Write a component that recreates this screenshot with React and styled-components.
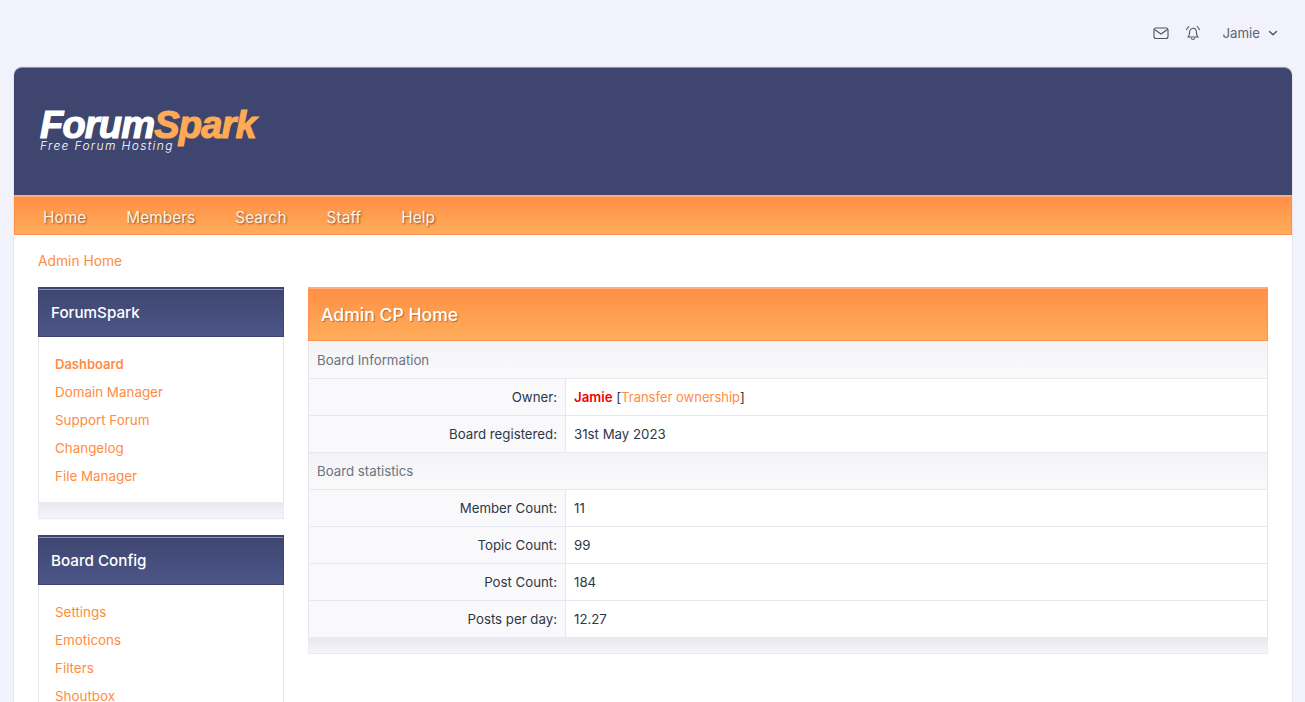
import React from "react";
import styled, { createGlobalStyle } from "styled-components";

const Global = createGlobalStyle`
  html, body { margin: 0; padding: 0; height: 702px; overflow: hidden; background: #f1f2fb; }
  body { font-family: "Inter", "Noto Sans", sans-serif; font-size: 13.25px; color: #2d3748; }
  * { box-sizing: border-box; }
`;

const Page = styled.div`
  height: 702px;
  overflow: hidden;
  padding: 0 13px 0 14px;
`;
const TopBar = styled.div`
  height: 67px;
  display: flex;
  align-items: center;
  justify-content: flex-end;
  color: #5b6375;
  padding-right: 14px;
  padding-bottom: 1px;
`;
const IconSlot = styled.span`
  display: flex;
  width: 16px;
  height: 16px;
  margin-right: ${p => p.$gap}px;
`;
const UserName = styled.span`
  font-size: 13.25px;
  margin-right: 8px;
`;
const Card = styled.div`
  background: #fff;
  border-radius: 8px 8px 0 0;
  box-shadow: 0 0 0 1px #e6e7f0;
  min-height: 700px;
`;
const Banner = styled.header`
  height: 128px;
  background: #3e4670;
  border-top: 1px solid #8f93a8;
  border-radius: 8px 8px 0 0;
  padding: 38px 0 0 26px;
`;
const Logo = styled.div`
  position: relative;
  width: 230px;
  height: 50px;
`;
const LogoWord = styled.div`
  font-family: "Liberation Sans", Arial, sans-serif;
  font-weight: 700;
  font-style: italic;
  font-size: 38px;
  letter-spacing: -0.8px;
  line-height: 38px;
  color: #fff;
  -webkit-text-stroke: 1.2px currentColor;
`;
const Accent = styled.span`
  color: #ffaa55;
`;
const LogoTag = styled.div`
  position: absolute;
  left: 0;
  top: 32px;
  font-size: 12px;
  font-style: italic;
  font-weight: 300;
  letter-spacing: 1.34px;
  line-height: 15px;
  color: #fff;
`;
const Nav = styled.nav`
  height: 40px;
  display: flex;
  align-items: center;
  gap: 40px;
  padding: 3px 0 0 28px;
  background: linear-gradient(#ff8f45, #ffad5a);
  border: 1px solid #ff9150;
  border-top: 2px solid #ffae7c;
  border-left-color: #ff8f45;
`;
const NavLink = styled.a`
  color: #fff3e6;
  font-size: 15.3px;
  letter-spacing: 0.1px;
  text-shadow: 1px 1px 2px rgba(110, 60, 20, 0.8);
`;
const Content = styled.div`
  padding: 0 24px;
`;
const Breadcrumb = styled.div`
  height: 52px;
  padding-top: 18px;
  line-height: 17px;
  color: #ff8c42;
  font-size: 13.8px;
`;
const Columns = styled.div`
  display: grid;
  grid-template-columns: 246px 960px;
  gap: 24px;
  align-items: start;
`;
const Side = styled.aside`
  display: flex;
  flex-direction: column;
  gap: 16px;
`;
const SideBox = styled.section``;
const SideHead = styled.h3`
  margin: 0;
  height: 50px;
  display: flex;
  align-items: center;
  padding: 0 12px;
  font-size: 15.2px;
  font-weight: 500;
  color: #fff;
  background: linear-gradient(#3e4670, #4c5688);
  border: 1px solid #3e4670;
  border-top: 2px solid #3e4670;
  box-shadow: inset 0 1px 0 #8f93a8;
`;
const SideList = styled.ul`
  list-style: none;
  margin: 0;
  padding: 13px 16px 11px;
  border-left: 1px solid #e6e7f0;
  border-right: 1px solid #e6e7f0;
  height: ${p => (p.$open ? "auto" : "165px")};
`;
const SideItem = styled.li`
  height: 28px;
  line-height: 28px;
  color: #ff8c42;
  font-size: ${p => (p.$active ? 13 : 13.4)}px;
  font-weight: ${p => (p.$active ? 600 : 400)};
`;
const Foot = styled.div`
  height: ${p => p.$h}px;
  background: linear-gradient(#e9eaf1, #f5f5fa);
  border: 1px solid #ebecf3;
`;
const Main = styled.main``;
const TitleBar = styled.h2`
  margin: 0;
  height: 54px;
  display: flex;
  align-items: center;
  padding: 0 12px;
  font-size: 17.6px;
  font-weight: 500;
  color: #fff;
  text-shadow: 1px 1px 1px rgba(110, 60, 20, 0.5);
  background: linear-gradient(#ff8f45, #ffad5a);
  border: 1px solid #ff9150;
  border-top: 2px solid #ffae7c;
`;
const Table = styled.div`
  border-left: 1px solid #e6e7f0;
  border-right: 1px solid #e6e7f0;
`;
const SectionRow = styled.div`
  height: ${p => p.$h}px;
  padding-left: 8px;
  display: flex;
  align-items: center;
  color: #6b7280;
  background: linear-gradient(#f3f3f6, #fafafb);
  border-bottom: 1px solid #e6e7f0;
`;
const Row = styled.div`
  height: 37px;
  display: grid;
  grid-template-columns: 257px 1fr;
  border-bottom: 1px solid #e6e7f0;
`;
const Label = styled.div`
  display: flex;
  align-items: center;
  justify-content: flex-end;
  padding-right: 8px;
  background: #f9f9fb;
  border-right: 1px solid #e6e7f0;
  color: #2d3748;
`;
const Value = styled.div`
  display: flex;
  align-items: center;
  padding-left: 8px;
  white-space: pre;
  color: #2d3748;
`;
const Owner = styled.strong`
  color: #f00000;
  font-weight: 600;
`;
const Link = styled.a`
  color: #ff8c42;
  font-size: 13px;
`;

const Mail = () => (
  <svg width="16" height="16" viewBox="0 0 16 16" fill="none" stroke="#4b5563" strokeWidth="1.1">
    <rect x="1" y="3" width="14" height="10.5" rx="2" />
    <path d="M1.5 4.5 8 9l6.5-4.5" />
  </svg>
);
const Bell = () => (
  <svg width="16" height="16" viewBox="0 0 16 16" fill="none" stroke="#4b5563" strokeWidth="1.1" strokeLinecap="round">
    <path d="M3.2 12c1-1 1.3-2 1.3-4.2 0-2.6 1.5-4.6 3.5-4.6s3.5 2 3.5 4.6c0 2.2.3 3.2 1.3 4.2H3.2Z" />
    <path d="M6.2 13.4c.6 1.4 3 1.4 3.6 0" />
    <path d="M1.6 4.6c.4-1.4 1.1-2.3 2.2-3M14.4 4.6c-.4-1.4-1.1-2.3-2.2-3" />
  </svg>
);
const Chevron = () => (
  <svg width="10" height="10" viewBox="0 0 10 10" fill="none" stroke="#4b5563" strokeWidth="1.4" strokeLinecap="round" strokeLinejoin="round">
    <path d="M1.5 3.5 5 6.8l3.5-3.3" />
  </svg>
);

const navItems = ["Home", "Members", "Search", "Staff", "Help"];
const dashboard = ["Dashboard", "Domain Manager", "Support Forum", "Changelog", "File Manager"];
const config = ["Settings", "Emoticons", "Filters", "Shoutbox"];

export default function App() {
  return (
    <Page>
      <Global />
      <TopBar>
        <IconSlot $gap={16}><Mail /></IconSlot>
        <IconSlot $gap={21}><Bell /></IconSlot>
        <UserName>Jamie</UserName>
        <Chevron />
      </TopBar>
      <Card>
        <Banner>
          <Logo>
            <LogoWord>Forum<Accent>Spark</Accent></LogoWord>
            <LogoTag>Free Forum Hosting</LogoTag>
          </Logo>
        </Banner>
        <Nav>
          {navItems.map(n => <NavLink key={n}>{n}</NavLink>)}
        </Nav>
        <Content>
          <Breadcrumb>Admin Home</Breadcrumb>
          <Columns>
            <Side>
              <SideBox>
                <SideHead>ForumSpark</SideHead>
                <SideList>
                  {dashboard.map((d, i) => <SideItem key={d} $active={i === 0}>{d}</SideItem>)}
                </SideList>
                <Foot $h={17} />
              </SideBox>
              <SideBox>
                <SideHead>Board Config</SideHead>
                <SideList $open>
                  {config.map(d => <SideItem key={d}>{d}</SideItem>)}
                </SideList>
              </SideBox>
            </Side>
            <Main>
              <TitleBar>Admin CP Home</TitleBar>
              <Table>
                <SectionRow $h={38}>Board Information</SectionRow>
                <Row>
                  <Label>Owner:</Label>
                  <Value><Owner>Jamie</Owner> [<Link>Transfer ownership</Link>]</Value>
                </Row>
                <Row>
                  <Label>Board registered:</Label>
                  <Value>31st May 2023</Value>
                </Row>
                <SectionRow $h={37}>Board statistics</SectionRow>
                <Row><Label>Member Count:</Label><Value>11</Value></Row>
                <Row><Label>Topic Count:</Label><Value>99</Value></Row>
                <Row><Label>Post Count:</Label><Value>184</Value></Row>
                <Row><Label>Posts per day:</Label><Value>12.27</Value></Row>
              </Table>
              <Foot $h={16} />
            </Main>
          </Columns>
        </Content>
      </Card>
    </Page>
  );
}
